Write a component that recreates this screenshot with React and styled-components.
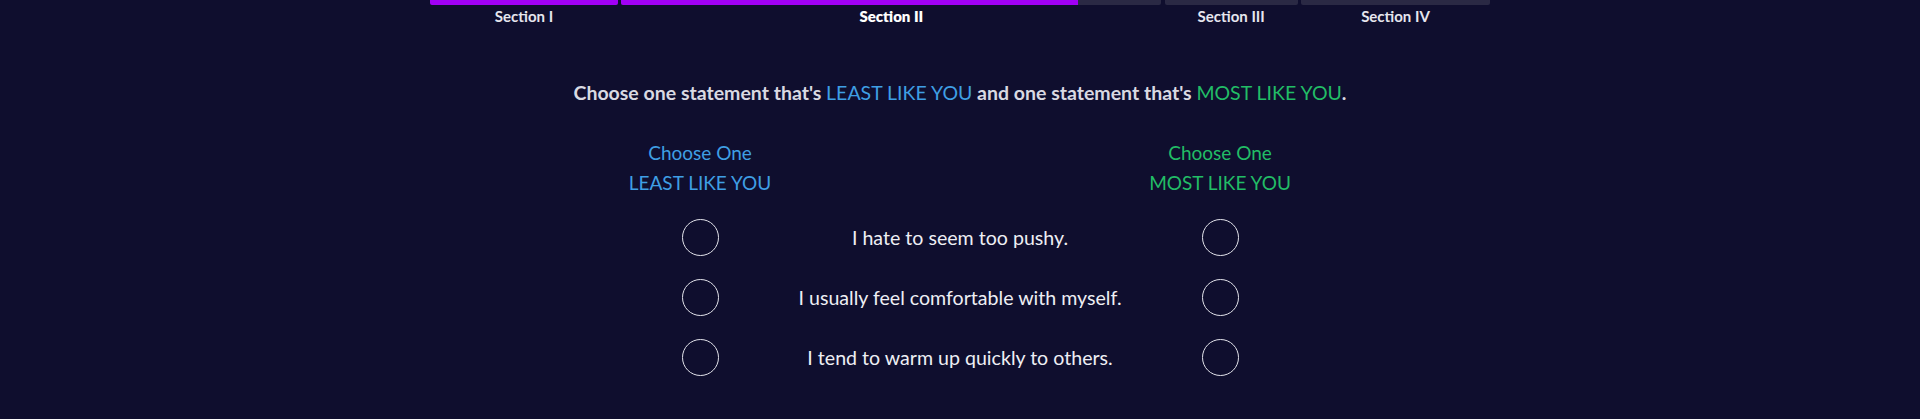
import styled, { createGlobalStyle } from "styled-components";

const sections = [
  { id: 1, label: "Section I", width: 188, fill: 100 },
  { id: 2, label: "Section II", width: 540, fill: 84.6, active: true },
  { id: 3, label: "Section III", width: 133, fill: 0 },
  { id: 4, label: "Section IV", width: 189, fill: 0 },
];

const statements = [
  "I hate to seem too pushy.",
  "I usually feel comfortable with myself.",
  "I tend to warm up quickly to others.",
];

const BLUE = "#3f9fe4";
const GREEN = "#22bd66";

const GlobalStyle = createGlobalStyle`
  body {
    margin: 0;
    background: #0f0e2e;
    font-family: Lato, "Open Sans", sans-serif;
    color: #ececf2;
  }
`;

const App = () => {
  return (
    <>
      <GlobalStyle />
      <Page>
        <Progress>
          {sections.map(({ id, label, width, fill, active }) => (
            <Segment key={id} style={{ width }}>
              <Track>
                <Fill style={{ width: `${fill}%` }} />
              </Track>
              <SegmentLabel active={active}>{label}</SegmentLabel>
            </Segment>
          ))}
        </Progress>

        <Instruction>
          Choose one statement that's <Least>LEAST LIKE YOU</Least> and one
          statement that's <Most>MOST LIKE YOU</Most>.
        </Instruction>

        <Grid>
          <ColumnHead color={BLUE}>
            <span>Choose One</span>
            <span>LEAST LIKE YOU</span>
          </ColumnHead>
          <div />
          <ColumnHead color={GREEN}>
            <span>Choose One</span>
            <span>MOST LIKE YOU</span>
          </ColumnHead>

          {statements.map((text) => (
            <Row key={text}>
              <Cell>
                <Radio aria-label="least like you" />
              </Cell>
              <Statement>{text}</Statement>
              <Cell>
                <Radio aria-label="most like you" />
              </Cell>
            </Row>
          ))}
        </Grid>
      </Page>
    </>
  );
};

export default App;

const Page = styled.div`
  width: 1060px;
  margin: 0 auto;
  min-height: 419px;
`;

const Progress = styled.div`
  display: flex;
  justify-content: space-between;
`;

const Segment = styled.div`
  display: flex;
  flex-direction: column;
  align-items: center;
`;

const Track = styled.div`
  width: 100%;
  height: 5px;
  background: #2a2944;
  border-radius: 0 0 2px 2px;
  overflow: hidden;
`;

const Fill = styled.div`
  height: 100%;
  background: #a100f5;
`;

const SegmentLabel = styled.div`
  margin-top: 3px;
  font-size: 15px;
  line-height: 17px;
  font-weight: ${({ active }) => (active ? 800 : 700)};
  color: ${({ active }) => (active ? "#ffffff" : "#e6e6ee")};
`;

const Instruction = styled.p`
  margin: 56px 0 0;
  text-align: center;
  font-size: 19.5px;
  line-height: 24px;
  font-weight: 700;
  color: #d9d9e2;
`;

const Least = styled.span`
  color: ${BLUE};
  font-weight: 400;
`;

const Most = styled.span`
  color: ${GREEN};
  font-weight: 400;
`;

const Grid = styled.div`
  display: grid;
  grid-template-columns: 180px 340px 180px;
  justify-content: center;
  margin-top: 33px;
`;

const ColumnHead = styled.div`
  display: flex;
  flex-direction: column;
  align-items: center;
  font-size: 19px;
  line-height: 29.5px;
  color: ${({ color }) => color};
  margin-bottom: 10px;
`;

const Row = styled.div`
  display: contents;
`;

const Cell = styled.div`
  height: 60px;
  display: flex;
  align-items: center;
  justify-content: center;
`;

const Radio = styled.button`
  width: 37px;
  height: 37px;
  padding: 0;
  border-radius: 50%;
  border: 1.5px solid #e2e2ea;
  background: transparent;
  cursor: pointer;
`;

const Statement = styled.div`
  height: 60px;
  display: flex;
  align-items: center;
  justify-content: center;
  font-size: 19.6px;
  color: #eeeef4;
  white-space: nowrap;
`;
